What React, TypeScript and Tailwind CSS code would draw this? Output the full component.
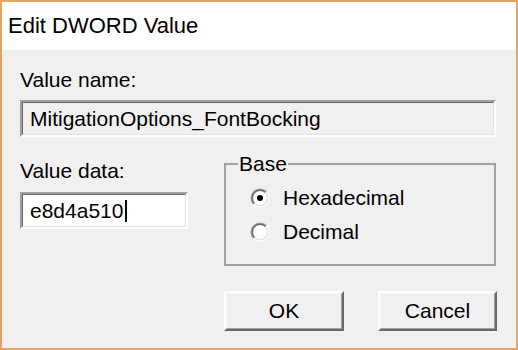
import React from 'react';

const Radio: React.FC<{ checked?: boolean }> = ({ checked }) => (
  <svg width="20" height="20" viewBox="0 0 20 20" className="shrink-0">
    <circle cx="10" cy="10" r="8" fill="#ffffff" />
    <path d="M3.64 16.36 A9 9 0 0 1 16.36 3.64" fill="none" stroke="#a0a0a0" strokeWidth="1.5" />
    <path d="M4.52 15.48 A7.75 7.75 0 0 1 15.48 4.52" fill="none" stroke="#696969" strokeWidth="1.5" />
    <path d="M16.36 3.64 A9 9 0 0 1 3.64 16.36" fill="none" stroke="#ffffff" strokeWidth="1.5" />
    <path d="M15.48 4.52 A7.75 7.75 0 0 1 4.52 15.48" fill="none" stroke="#e3e3e3" strokeWidth="1.5" />
    {checked && <circle cx="10" cy="10" r="3" fill="#000000" />}
  </svg>
);

const DlgButton: React.FC<{ label: string; className?: string }> = ({ label, className }) => (
  <button
    className={`h-[40px] border-2 border-t-white border-l-white border-r-[#696969] border-b-[#696969] bg-[#f0f0f0] ${className ?? ''}`}
  >
    <div className="h-full w-full border border-t-[#f7f7f7] border-l-[#f7f7f7] border-r-[#a0a0a0] border-b-[#a0a0a0] flex items-center justify-center">
      {label}
    </div>
  </button>
);

export default function App() {
  return (
    <div className="w-[518px] h-[350px] border-2 border-[#e3a466] flex flex-col text-[21px] leading-[24px] text-black font-['Liberation_Sans',Arial,sans-serif]">
      {/* Title bar */}
      <div className="h-[48px] bg-white flex items-center pl-[6px] text-[22px]">Edit DWORD Value</div>

      {/* Body */}
      <div className="flex-1 bg-[#f0f0f0] pl-[18px] pr-[20px] flex flex-col">
        <div className="mt-[18px]">Value name:</div>
        <div className="mt-[8px] h-[37px] border-2 border-t-[#a0a0a0] border-l-[#a0a0a0] border-r-white border-b-white">
          <div className="h-full border border-t-[#696969] border-l-[#696969] border-r-[#e3e3e3] border-b-[#e3e3e3] bg-[#f0f0f0] pl-[7px] flex items-center">
            MitigationOptions_FontBocking
          </div>
        </div>

        <div className="mt-[15px] flex items-start">
          <div className="w-[168px] mt-[7px] flex flex-col">
            <div>Value data:</div>
            <div className="mt-[9px] h-[37px] border-2 border-t-[#a0a0a0] border-l-[#a0a0a0] border-r-white border-b-white">
              <div className="h-full border border-t-[#696969] border-l-[#696969] border-r-[#e3e3e3] border-b-[#e3e3e3] bg-white pl-[7px] flex items-center">
                e8d4a510
                <span className="ml-[2px] inline-block w-[2px] h-[22px] bg-black" />
              </div>
            </div>
          </div>

          <fieldset className="ml-[36px] flex-1 border-2 border-[#a0a0a0] pl-[24px] pt-[5px] pb-[15px]">
            <legend className="-ml-[12px] px-[1px]">Base</legend>
            <div className="h-[34px] flex items-center gap-[13px]">
              <Radio checked />
              <span>Hexadecimal</span>
            </div>
            <div className="h-[34px] flex items-center gap-[13px]">
              <Radio />
              <span>Decimal</span>
            </div>
          </fieldset>
        </div>

        <div className="mt-[25px] flex justify-end gap-[34px] pr-0 -mr-[1px]">
          <DlgButton label="OK" className="w-[120px]" />
          <DlgButton label="Cancel" className="w-[119px]" />
        </div>
      </div>
    </div>
  );
}
